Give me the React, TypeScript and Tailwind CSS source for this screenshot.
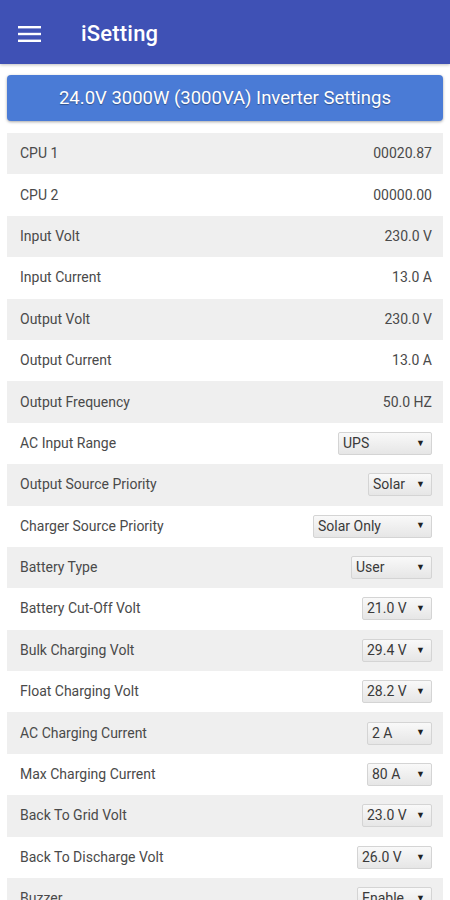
type Row = { label: string; value?: string; select?: string; w?: number }

const rows: Row[] = [
  { label: 'CPU 1', value: '00020.87' },
  { label: 'CPU 2', value: '00000.00' },
  { label: 'Input Volt', value: '230.0 V' },
  { label: 'Input Current', value: '13.0 A' },
  { label: 'Output Volt', value: '230.0 V' },
  { label: 'Output Current', value: '13.0 A' },
  { label: 'Output Frequency', value: '50.0 HZ' },
  { label: 'AC Input Range', select: 'UPS', w: 94 },
  { label: 'Output Source Priority', select: 'Solar', w: 64 },
  { label: 'Charger Source Priority', select: 'Solar Only', w: 119 },
  { label: 'Battery Type', select: 'User', w: 81 },
  { label: 'Battery Cut-Off Volt', select: '21.0 V', w: 70 },
  { label: 'Bulk Charging Volt', select: '29.4 V', w: 70 },
  { label: 'Float Charging Volt', select: '28.2 V', w: 70 },
  { label: 'AC Charging Current', select: '2 A', w: 65 },
  { label: 'Max Charging Current', select: '80 A', w: 65 },
  { label: 'Back To Grid Volt', select: '23.0 V', w: 70 },
  { label: 'Back To Discharge Volt', select: '26.0 V', w: 75 },
  { label: 'Buzzer', select: 'Enable', w: 75 },
]

function SelectBox({ text, width }: { text: string; width: number }) {
  return (
    <div
      className="h-[23px] flex items-center justify-between pl-[4px] pr-[6px] border border-[#d4d4d4] rounded-[2px] bg-gradient-to-b from-[#f9f9f9] to-[#e6e6e6] text-[14px] text-[#3a3a3a]"
      style={{ width }}
    >
      <span>{text}</span>
      <span className="text-[9px] text-[#222]">▼</span>
    </div>
  )
}

export default function App() {
  return (
    <div className="w-[450px] h-[900px] overflow-hidden bg-white font-['Roboto',sans-serif]">
      <header className="h-[64px] bg-[#3f51b5] flex items-center pt-[3px] shadow-[0_1px_3px_rgba(0,0,0,0.25)]">
        <svg className="ml-[18px]" width="23" height="16" viewBox="0 0 23 16">
          <rect x="0" y="0" width="23" height="2.4" fill="white" />
          <rect x="0" y="6.8" width="23" height="2.4" fill="white" />
          <rect x="0" y="13.6" width="23" height="2.4" fill="white" />
        </svg>
        <h1 className="ml-[40px] text-white text-[22px] font-medium tracking-[0.2px]">iSetting</h1>
      </header>
      <div className="px-[7px] pt-[11px]">
        <div className="h-[46px] pt-[1px] rounded-[4px] bg-[#4a7bd6] shadow-[0_1px_3px_rgba(0,0,0,0.35)] flex items-center justify-center text-white text-[18.5px] [text-shadow:0_1px_1px_rgba(0,0,0,0.35)]">
          24.0V 3000W (3000VA) Inverter Settings
        </div>
        <div className="mt-[12px]">
          {rows.map((r, i) => (
            <div
              key={r.label}
              className={`h-[41.4px] flex items-center justify-between pl-[13px] pr-[11px] text-[14px] text-[#4a4a4a] ${i % 2 === 0 ? 'bg-[#efefef]' : 'bg-white'}`}
            >
              <span>{r.label}</span>
              {r.value ? <span>{r.value}</span> : <SelectBox text={r.select!} width={r.w!} />}
            </div>
          ))}
        </div>
      </div>
    </div>
  )
}
